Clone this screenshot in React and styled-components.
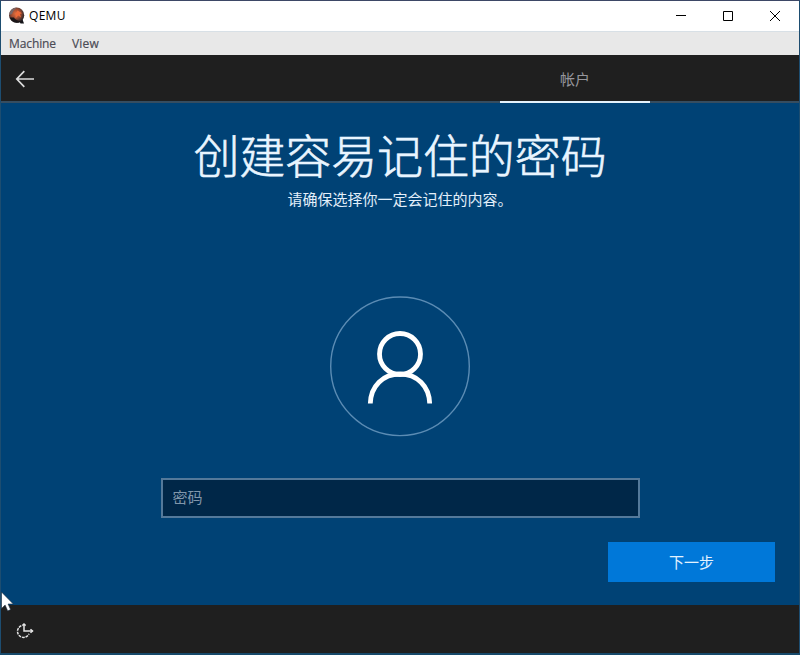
import React from "react"
import styled, { createGlobalStyle } from "styled-components"

const GlobalStyle = createGlobalStyle`
    * {
        box-sizing: border-box;
    }
    body {
        margin: 0;
        background: #004275;
    }
`;

const Window = styled.div`
    display: flex;
    flex-direction: column;
    position: relative;
    width: 800px;
    height: 655px;
    overflow: hidden;
    border: 1px solid #1d4d70;
    border-top-color: #3d4866;
    border-bottom: 2px solid #16496a;
    background: #004275;
    font-family: "Noto Sans CJK SC", sans-serif;
`;

const TitleBar = styled.header`
    display: flex;
    align-items: center;
    height: 30px;
    padding: 0 1px 0 7px;
    background: #fff;
`;

const Title = styled.span`
    flex: 1;
    margin-left: 3px;
    color: #000;
    font: 12px/30px "Open Sans", sans-serif;
    letter-spacing: 0.3px;
`;

const WindowButton = styled.button`
    display: flex;
    align-items: center;
    justify-content: center;
    width: 47px;
    height: 30px;
    padding: 0;
    border: none;
    background: none;
`;

const MenuBar = styled.nav`
    display: flex;
    gap: 16px;
    height: 24px;
    padding-left: 8px;
    border-top: 1px solid #d8e0e6;
    background: #e8e8e8;
`;

const MenuItem = styled.span`
    color: #4b4b55;
    font: 12px/24px "Open Sans", sans-serif;
    letter-spacing: ${props => props.$spacing || "-0.1px"};
    -webkit-text-stroke: 0.2px;
`;

const Header = styled.div`
    display: flex;
    justify-content: space-between;
    height: 48px;
    padding-right: 149px;
    border-bottom: 2px solid #364d60;
    background: #1f1f1f;
`;

const BackButton = styled.button`
    display: flex;
    align-items: center;
    height: 46px;
    padding: 2px 0 0 14px;
    border: none;
    background: none;
`;

const Tab = styled.div`
    width: 150px;
    height: 48px;
    border-bottom: 2px solid #e3f1fb;
    color: #96969c;
    font-size: 15px;
    line-height: 47px;
    text-align: center;
`;

const Content = styled.main`
    display: flex;
    flex-direction: column;
    align-items: center;
    height: 502px;
    padding-top: 23px;
`;

const Heading = styled.h1`
    margin: 0;
    color: #e9f5ff;
    font-size: 46px;
    font-weight: 300;
    line-height: 54px;
    letter-spacing: -0.1px;
    -webkit-text-stroke: 0.6px #e9f5ff;
`;

const Subtitle = styled.p`
    margin: 7px 0 0;
    color: #e3effa;
    font-size: 15px;
    line-height: 24px;
`;

const Avatar = styled.div`
    width: 142px;
    height: 142px;
    margin-top: 84px;
`;

const PasswordInput = styled.input`
    width: 479px;
    height: 40px;
    margin-top: 41px;
    padding: 0 10px 4px;
    border: 2px solid #54799a;
    border-radius: 0;
    background: #002748;
    color: #fff;
    font: 15px "Noto Sans CJK SC", sans-serif;
    outline: none;

    &::placeholder {
        color: #8096ab;
        opacity: 1;
    }
`;

const NextButton = styled.button`
    align-self: flex-end;
    width: 167px;
    height: 40px;
    margin: 24px 24px 0 0;
    padding: 0;
    border: none;
    background: #0078d9;
    color: #e3f3ff;
    font: 15px/40px "Noto Sans CJK SC", sans-serif;
`;

const Footer = styled.footer`
    display: flex;
    align-items: center;
    height: 48px;
    padding: 4px 0 0 14px;
    background: #1f1f1f;
`;

const Pointer = styled.svg`
    position: absolute;
    left: 0;
    top: 590px;
`;

const QemuLogo = () => (
    <svg width="18" height="18" viewBox="0 0 18 18">
        <defs>
            <radialGradient id="ball" cx="0.45" cy="0.4" r="0.6">
                <stop offset="0" stopColor="#e0703f" />
                <stop offset="0.5" stopColor="#a04c32" />
                <stop offset="0.85" stopColor="#43302e" />
                <stop offset="1" stopColor="#1d1b1e" />
            </radialGradient>
        </defs>
        <path d="M10 12l4-1 2 5.5-3.5 0z" fill="#15151a" />
        <circle cx="8.6" cy="8.2" r="7.6" fill="url(#ball)" />
        <path d="M1.2 8C1.4 3.5 5 .8 8.8.8 6.5 2.5 5 4 4 7z" fill="#77686a" />
        <path d="M9.5 3.5l4.5 2.7-2.2.8 1.4 3.5-3-2-2.6 2.8-.2-4.3z" fill="#ee6a38" />
        <path d="M1.8 10.5c1 3 3.7 5.2 7 5.3 2.2 0 4-.6 5.2-2-3.5.4-6.5-.6-8.2-3.3z" fill="#1b1618" />
    </svg>
)

const BackArrow = () => (
    <svg width="20" height="18" viewBox="0 0 20 18" fill="none" stroke="#dcdcdc" strokeWidth="1.7">
        <path d="M19 9H1.8M9.3 1.2L1.8 9l7.5 7.8" />
    </svg>
)

const PersonIcon = () => (
    <svg width="142" height="142" viewBox="0 0 142 142" fill="none">
        <circle cx="71" cy="71.3" r="69.3" stroke="#5b8cb4" strokeWidth="1.4" />
        <circle cx="71" cy="59" r="20.5" stroke="#fff" strokeWidth="4.8" />
        <path d="M41.3 108.5C41.8 91 54 79 71 79s29.2 12 29.7 29.5" stroke="#fff" strokeWidth="4.8" />
    </svg>
)

const EaseOfAccessIcon = () => (
    <svg width="20" height="18" viewBox="0 0 20 18" fill="none" stroke="#e6e6e6" strokeWidth="1.5">
        <path d="M6.3 3.8A6 6 0 1 0 14 11.8" strokeDasharray="2.8 0.9" />
        <path d="M9 2V9H17.5" />
        <path d="M7.4 3.6L9 2l1.6 1.6M15.5 7.2L17.5 9l-2 1.8" />
    </svg>
)

const App = () => (
    <>
        <GlobalStyle />
        <Window>
            <TitleBar>
                <QemuLogo />
                <Title>QEMU</Title>
                <WindowButton>
                    <svg width="10" height="10"><path d="M0 4.5h10" stroke="#000" /></svg>
                </WindowButton>
                <WindowButton>
                    <svg width="10" height="10"><path d="M.5.5h9v9h-9z" fill="none" stroke="#000" /></svg>
                </WindowButton>
                <WindowButton>
                    <svg width="10" height="10"><path d="M0 0l10 10M10 0L0 10" stroke="#000" /></svg>
                </WindowButton>
            </TitleBar>
            <MenuBar>
                <MenuItem>Machine</MenuItem>
                <MenuItem $spacing="0.2px">View</MenuItem>
            </MenuBar>
            <Header>
                <BackButton><BackArrow /></BackButton>
                <Tab>帐户</Tab>
            </Header>
            <Content>
                <Heading>创建容易记住的密码</Heading>
                <Subtitle>请确保选择你一定会记住的内容。</Subtitle>
                <Avatar><PersonIcon /></Avatar>
                <PasswordInput type="password" placeholder="密码" />
                <NextButton>下一步</NextButton>
            </Content>
            <Footer><EaseOfAccessIcon /></Footer>
            <Pointer width="13" height="21" viewBox="0 0 13 21">
                <path d="M.5 1v16.5l3.6-3.4 2.6 5.8 2.9-1.3-2.5-5.6H12.3z" fill="#fff" stroke="#15293a" strokeWidth="0.6" />
            </Pointer>
        </Window>
    </>
)

export default App;
